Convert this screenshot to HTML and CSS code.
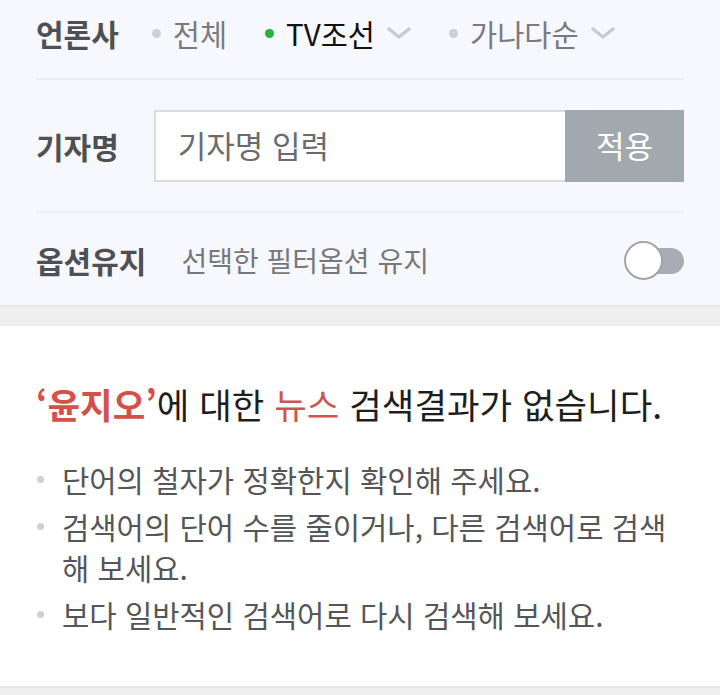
FILE: index.html
```html
<!DOCTYPE html>
<html lang="ko">
<head>
<meta charset="utf-8">
<title>뉴스 검색</title>
<link rel="stylesheet" href="styles.css">
</head>
<body>
<div class="filter">
  <div class="row row-press">
    <span class="label">언론사</span>
    <div class="opts">
      <span class="opt"><i class="dot"></i>전체</span>
      <span class="opt opt-on"><i class="dot dot-on"></i>TV조선<svg class="chev" viewBox="0 0 24 12" width="24" height="12"><path d="M2 2 L12 10 L22 2" fill="none" stroke="#c8cbd0" stroke-width="3.5" stroke-linecap="round" stroke-linejoin="round"/></svg></span>
      <span class="opt"><i class="dot"></i>가나다순<svg class="chev" viewBox="0 0 24 12" width="24" height="12"><path d="M2 2 L12 10 L22 2" fill="none" stroke="#c8cbd0" stroke-width="3.5" stroke-linecap="round" stroke-linejoin="round"/></svg></span>
    </div>
  </div>
  <div class="row row-reporter">
    <span class="label">기자명</span>
    <div class="search">
      <input class="search-input" type="text" placeholder="기자명 입력">
      <button class="search-btn" type="button">적용</button>
    </div>
  </div>
  <div class="row row-keep">
    <span class="label">옵션유지</span>
    <span class="desc">선택한 필터옵션 유지</span>
    <span class="toggle"><span class="knob"></span></span>
  </div>
</div>
<div class="band"></div>
<div class="result">
  <h2 class="result-title"><strong class="hl">‘윤지오’</strong>에 대한 <span class="hl-soft">뉴스</span> 검색결과가 없습니다.</h2>
  <ul class="tips">
    <li>단어의 철자가 정확한지 확인해 주세요.</li>
    <li>검색어의 단어 수를 줄이거나, 다른 검색어로 검색 해 보세요.</li>
    <li>보다 일반적인 검색어로 다시 검색해 보세요.</li>
  </ul>
</div>
<div class="bottom"></div>
</body>
</html>
```
FILE: styles.css
```css
* { box-sizing: border-box; }
html, body { margin: 0; padding: 0; }
body {
  background: #eeeeee;
  font-family: "Noto Sans CJK KR", "Noto Sans", sans-serif;
  width: 720px;
}
.filter {
  background: #f7f8fd;
  padding: 0 36px;
}
.row {
  display: flex;
  align-items: center;
}
.label {
  font-size: 30px;
  font-weight: 700;
  color: #4f5053;
  flex: none;
}
.row-press {
  height: 80px;
  padding-bottom: 12px;
  border-bottom: 2px solid #ececf1;
}
.opts {
  display: flex;
  align-items: center;
  margin-left: 33px;
  gap: 38px;
}
.opt {
  display: flex;
  align-items: center;
  font-size: 29.5px;
  color: #7a7b7e;
}
.opt-on { color: #111; }
.dot {
  width: 9px;
  height: 9px;
  border-radius: 50%;
  background: #cfd0d3;
  margin-right: 12px;
}
.dot-on { background: #22b33b; }
.chev { margin-left: 12px; }
.row-reporter {
  height: 133px;
  border-bottom: 2px solid #ececf1;
}
.search {
  display: flex;
  margin-left: 35px;
  flex: 1;
  height: 72px;
}
.search-input {
  flex: 1;
  min-width: 0;
  border: 2px solid #dcdcde;
  border-right: none;
  background: #fff;
  font-family: inherit;
  font-size: 31px;
  padding: 0 0 2px 22px;
  color: #333;
  outline: none;
}
.search-input::placeholder { color: #6b6b6e; }
.search-btn {
  width: 119px;
  border: none;
  background: #a1a9ae;
  color: #fff;
  font-family: inherit;
  font-size: 31px;
  padding: 0 0 2px;
}
.row-keep {
  height: 92px;
  padding-top: 2px;
}
.desc {
  margin-left: 35px;
  font-size: 28px;
  color: #77787b;
  flex: 1;
}
.toggle {
  position: relative;
  width: 60px;
  height: 39px;
  flex: none;
}
.toggle::before {
  content: "";
  position: absolute;
  right: 0;
  top: 7px;
  width: 44px;
  height: 26px;
  border-radius: 13px;
  background: #a9abb5;
}
.knob {
  position: absolute;
  left: 0;
  top: 0;
  width: 39px;
  height: 39px;
  border-radius: 50%;
  background: #fff;
  border: 2px solid #a3a3a8;
}
.band {
  height: 21px;
  background: #efefef;
  border-top: 2px solid #e6e7eb;
  border-bottom: 1px solid #e9e9e9;
}
.result {
  background: #fff;
  padding: 56px 36px 51px;
}
.result-title {
  margin: 0;
  font-size: 35.4px;
  line-height: 44px;
  font-weight: 400;
  color: #1e1e1e;
}
.hl { color: #d6504a; font-weight: 700; }
.hl-soft { color: #d0544e; }
.tips {
  list-style: none;
  margin: 33px 0 0;
  padding: 0;
}
.tips li {
  display: flex;
  font-size: 29.7px;
  line-height: 41px;
  color: #555659;
  word-break: keep-all;
  margin-bottom: 6px;
}
.tips li:last-child { margin-bottom: 0; }
.tips li::before {
  content: "";
  flex: none;
  width: 7px;
  height: 7px;
  border-radius: 50%;
  background: #cfd0d3;
  margin: 17px 18px 0 1px;
}
.bottom {
  height: 9px;
  background: #eeeeee;
  border-top: 2px solid #e6e6e6;
}
```
